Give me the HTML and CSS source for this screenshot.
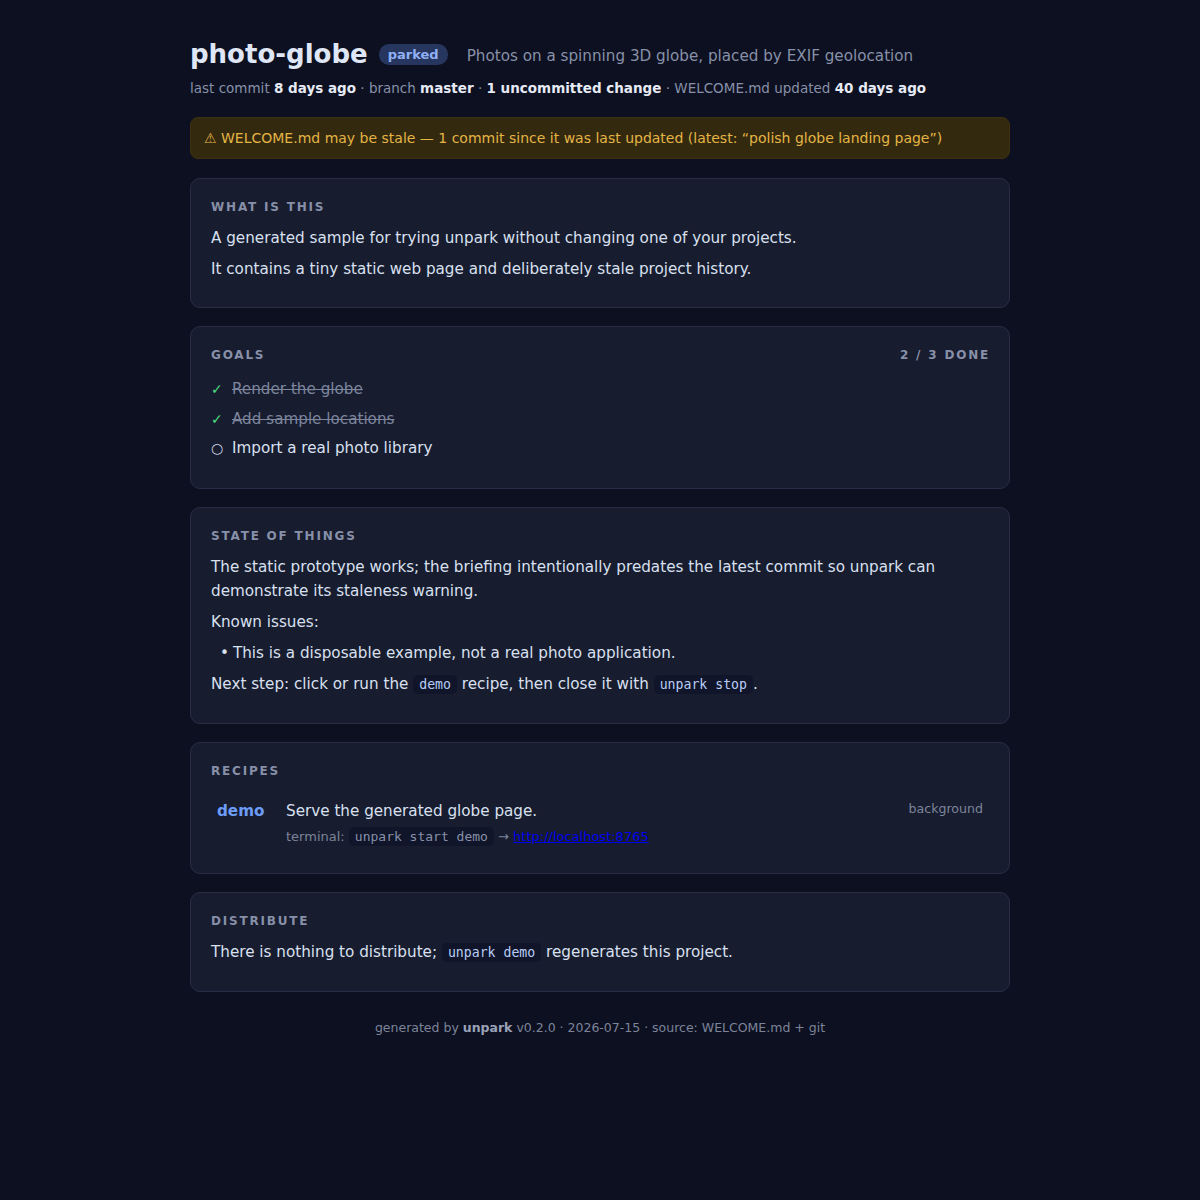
FILE: index.html
```html
<!DOCTYPE html>
<html lang="en">
<head>
    <meta charset="UTF-8">
    <meta name="viewport" content="width=device-width, initial-scale=1.0">
    <title>photo-globe · unpark</title>
    <link rel="stylesheet" href="styles.css">
</head>
<body>
    <div class="page">
        <header class="top">
            <div class="title-row">
                <h1>photo-globe</h1>
                <span class="badge">parked</span>
                <span class="tagline">Photos on a spinning 3D globe, placed by EXIF geolocation</span>
            </div>
            <div class="meta">
                last commit <b>8 days ago</b> · branch <b>master</b> · <b>1 uncommitted change</b> · WELCOME.md updated <b>40 days ago</b>
            </div>
        </header>

        <div class="warning">⚠ WELCOME.md may be stale — 1 commit since it was last updated (latest: “polish globe landing page”)</div>

        <section class="card">
            <h2>What is this</h2>
            <p>A generated sample for trying unpark without changing one of your projects.</p>
            <p>It contains a tiny static web page and deliberately stale project history.</p>
        </section>

        <section class="card">
            <div class="card-head">
                <h2>Goals</h2>
                <span class="count">2 / 3 done</span>
            </div>
            <ul class="goals">
                <li class="done"><span class="mark">✓</span><span class="goal-text">Render the globe</span></li>
                <li class="done"><span class="mark">✓</span><span class="goal-text">Add sample locations</span></li>
                <li><span class="mark open">○</span><span class="goal-text">Import a real photo library</span></li>
            </ul>
        </section>

        <section class="card">
            <h2>State of things</h2>
            <p>The static prototype works; the briefing intentionally predates the latest commit so unpark can demonstrate its staleness warning.</p>
            <p>Known issues:</p>
            <ul class="bullets">
                <li>This is a disposable example, not a real photo application.</li>
            </ul>
            <p class="next">Next step: click or run the <code>demo</code> recipe, then close it with <code>unpark stop</code>.</p>
        </section>

        <section class="card">
            <h2>Recipes</h2>
            <div class="recipe">
                <div class="recipe-name">demo</div>
                <div class="recipe-body">
                    <div class="recipe-desc">Serve the generated globe page.</div>
                    <div class="recipe-cmd">terminal: <code>unpark start demo</code> → <a href="#">http://localhost:8765</a></div>
                </div>
                <div class="recipe-mode">background</div>
            </div>
        </section>

        <section class="card">
            <h2>Distribute</h2>
            <p>There is nothing to distribute; <code>unpark demo</code> regenerates this project.</p>
        </section>

        <footer class="foot">
            generated by <b>unpark</b> v0.2.0 · 2026-07-15 · source: WELCOME.md + git
        </footer>
    </div>
</body>
</html>
```

FILE: styles.css
```css
* {
    margin: 0;
    padding: 0;
    box-sizing: border-box;
}

body {
    background: #0d1020;
    color: #d9e0f0;
    font-family: 'DejaVu Sans', sans-serif;
    font-size: 15.2px;
}

.page {
    width: 820px;
    margin: 0 auto;
    padding: 36px 0 60px;
}

.title-row {
    display: flex;
    align-items: center;
    height: 36px;
}

h1 {
    font-size: 26px;
    font-weight: bold;
    color: #dfe6f6;
    margin-right: 11px;
}

.badge {
    background: #27365e;
    color: #8fb0f5;
    font-size: 13px;
    font-weight: bold;
    padding: 2px 9px;
    border-radius: 10px;
    line-height: 17px;
    margin-right: 19px;
}

.tagline {
    color: #8790a8;
    font-size: 15.2px;
    padding-top: 3px;
}

.meta {
    margin-top: 6px;
    font-size: 13.5px;
    line-height: 20px;
    color: #8790a8;
}

.meta b {
    color: #e6eaf5;
}

.warning {
    margin-top: 19px;
    background: #33290f;
    border: 1px solid #3d3111;
    border-radius: 8px;
    color: #e4b445;
    font-size: 14px;
    line-height: 20px;
    padding: 10px 13px;
    margin-bottom: 19px;
}

.card {
    background: #171c2f;
    border: 1px solid #262d45;
    border-radius: 10px;
    padding: 20px 20px 19px;
    margin-bottom: 18px;
}

h2 {
    font-size: 12px;
    font-weight: bold;
    text-transform: uppercase;
    letter-spacing: 1.8px;
    color: #8790a8;
    line-height: 16px;
    margin-bottom: 11px;
}

.card p {
    line-height: 24px;
    margin-bottom: 7px;
}

.card p.next {
    line-height: 25px;
}

.card-head {
    display: flex;
    justify-content: space-between;
}

.count {
    font-size: 12px;
    font-weight: bold;
    text-transform: uppercase;
    letter-spacing: 1.8px;
    color: #8790a8;
    line-height: 16px;
    margin-right: -1px;
}

.goals {
    list-style: none;
    margin: 3px 0 9px;
}

.goals li {
    display: flex;
    align-items: center;
    line-height: 24px;
    margin-bottom: 5.5px;
}

.goals li:last-child {
    margin-bottom: 0;
}

.mark {
    width: 21px;
    font-size: 14px;
    color: #4ade80;
}

.mark.open {
    color: #d0d6e6;
}

.done .goal-text {
    color: #7c859c;
    text-decoration: line-through;
}

.bullets {
    list-style: none;
    padding-left: 9px;
    margin-bottom: 7px;
}

.bullets li {
    line-height: 24px;
}

.bullets li::before {
    content: "•";
    margin-right: 4px;
}

code {
    font-family: 'DejaVu Sans Mono', monospace;
    font-size: 13.2px;
    background: #10152a;
    color: #b8cdf5;
    padding: 2px 6px;
    border-radius: 5px;
}

.recipe {
    display: flex;
    align-items: flex-start;
    padding: 9px 6px 7px;
}

.recipe-name {
    width: 69px;
    font-size: 15.2px;
    font-weight: bold;
    color: #6d9cf7;
    line-height: 24px;
}

.recipe-body {
    flex: 1;
}

.recipe-desc {
    line-height: 24px;
}

.recipe-cmd {
    margin-top: 4px;
    font-size: 13px;
    line-height: 20px;
    color: #7c849a;
}

.recipe-cmd code {
    font-size: 13px;
    color: #8790a8;
}

.recipe-cmd a {
    color: #0000ee;
}

.recipe-mode {
    font-size: 12.6px;
    color: #7c849a;
    line-height: 20px;
}

.foot {
    margin-top: 28px;
    text-align: center;
    font-size: 12.5px;
    color: #7c849a;
}

.foot b {
    color: #9aa2b8;
}
```
